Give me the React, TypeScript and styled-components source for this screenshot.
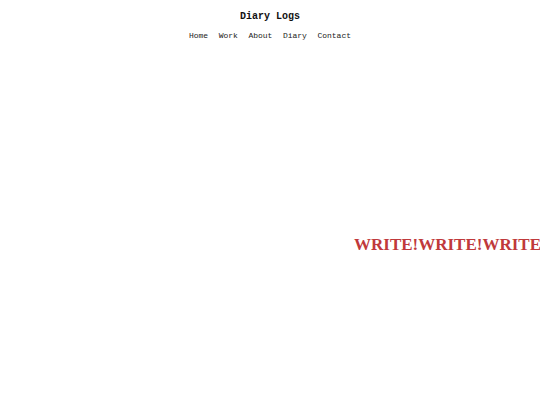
import React from 'react'
import styled, { createGlobalStyle } from 'styled-components'

const GlobalStyle = createGlobalStyle`
  html, body {
    margin: 0;
    padding: 0;
    background: #ffffff;
    overflow: hidden;
  }
`

const mono = `font-family: 'Liberation Mono', 'Courier New', monospace`

const Page = styled.div`
  width: 540px;
  height: 405px;
  display: flex;
  flex-direction: column;
  overflow: hidden;
`

const Header = styled.header`
  display: flex;
  flex-direction: column;
  align-items: center;
  padding-top: 11px;
  gap: 7px;
`

const Title = styled.h1`
  ${mono};
  font-size: 10px;
  font-weight: 700;
  color: #111111;
  margin: 0;
  line-height: 12px;
`

const Nav = styled.nav`
  display: flex;
  gap: 10.5px;
`

const NavLink = styled.a`
  ${mono};
  font-size: 8px;
  line-height: 12px;
  color: #222222;
  text-decoration: none;
`

const Hero = styled.section`
  display: flex;
  padding: 193px 0 0 354px;
  overflow: hidden;
`

const Shout = styled.h2`
  font-family: 'Liberation Serif', 'Times New Roman', serif;
  font-size: 17px;
  font-weight: 700;
  color: #c0393b;
  margin: 0;
  line-height: 20px;
  white-space: nowrap;
`

const links = ['Home', 'Work', 'About', 'Diary', 'Contact']

export default function App(): JSX.Element {
  return (
    <Page>
      <GlobalStyle />
      <Header>
        <Title>Diary Logs</Title>
        <Nav>
          {links.map((l) => (
            <NavLink key={l} href="#">{l}</NavLink>
          ))}
        </Nav>
      </Header>
      <Hero>
        <Shout>WRITE!WRITE!WRITE</Shout>
      </Hero>
    </Page>
  )
}
